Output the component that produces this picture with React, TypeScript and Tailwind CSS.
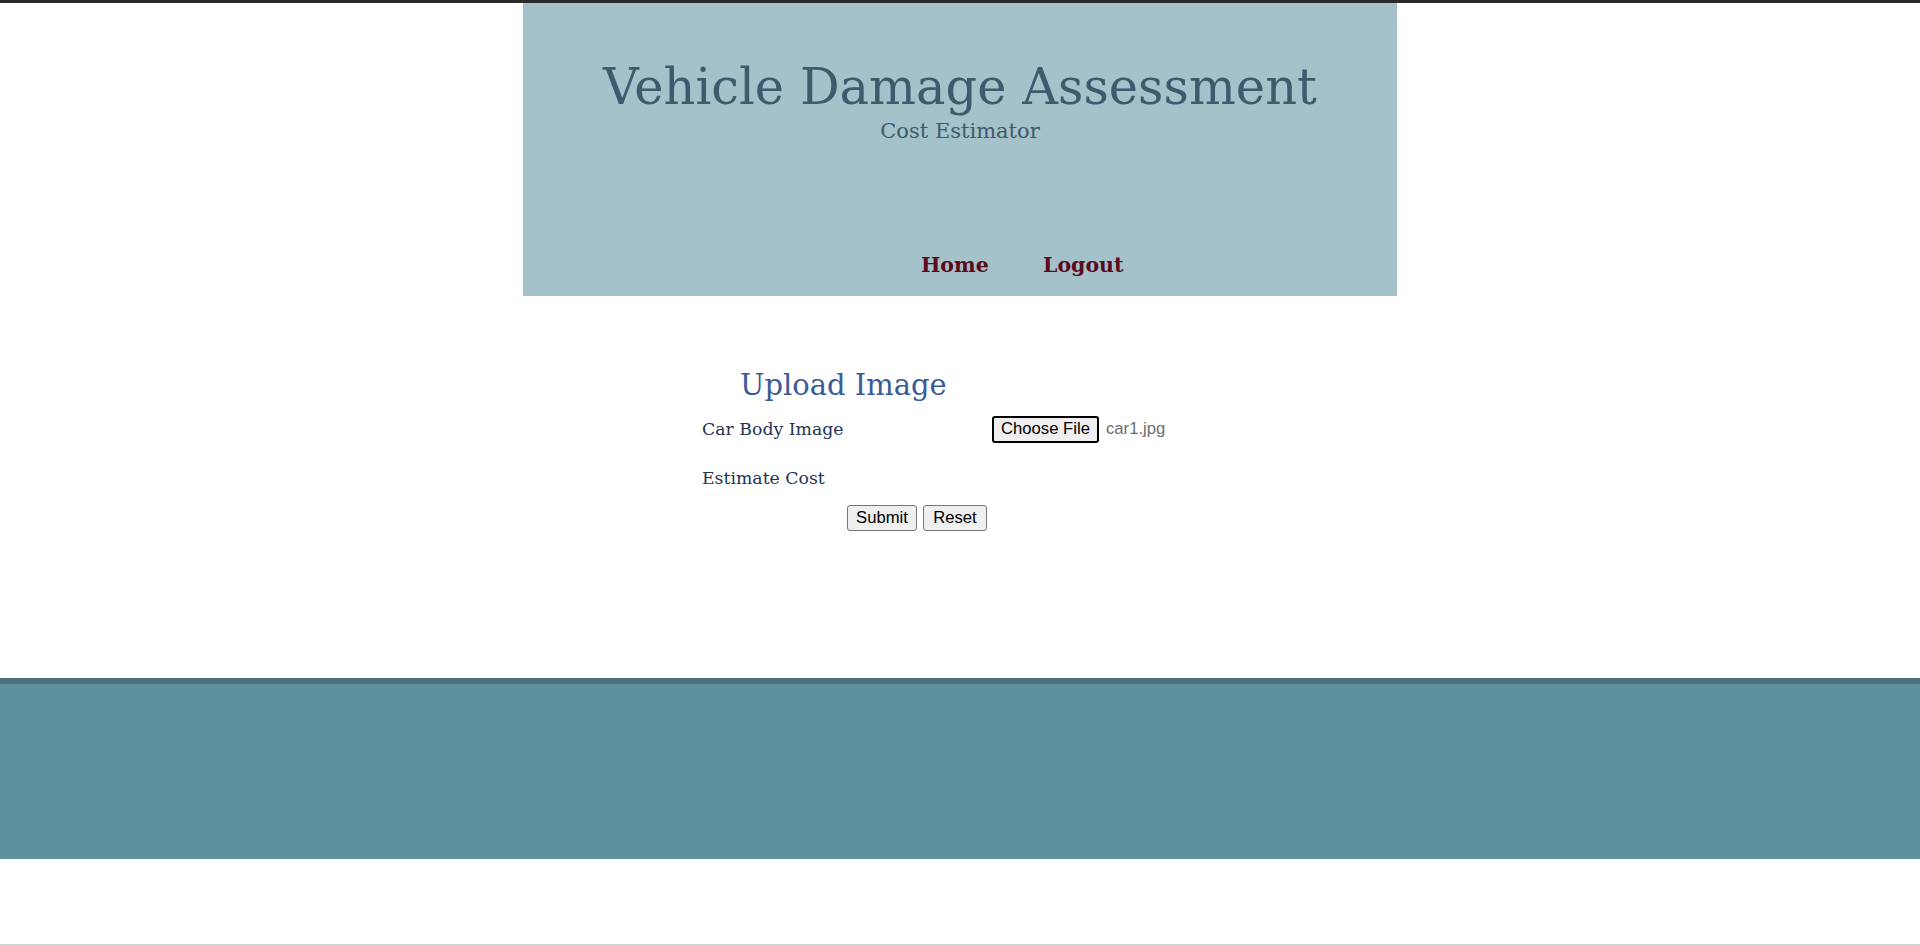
import React from "react"

const serif = "font-['DejaVu_Serif',serif]"

function Header() {
  return (
    <header className={`mx-auto w-[874px] h-[293px] bg-[#a5c1c9] flex flex-col items-center ${serif}`}>
      <h1 className="mt-[60px] text-[49.5px] leading-none text-[#3e5a6d] whitespace-nowrap">
        Vehicle Damage Assessment
      </h1>
      <p className="mt-[8px] text-[21px] leading-none text-[#3e5a6d]">Cost Estimator</p>
      {/* nav sits a bit right of centre, like the original ul */}
      <nav className="self-stretch mt-[113px] pl-[398px] flex items-center">
        <a href="#" className="w-[122px] text-[20.5px] leading-none font-bold text-[#5b0a1e]">
          Home
        </a>
        <a href="#" className="text-[20.5px] leading-none font-bold text-[#5b0a1e]">
          Logout
        </a>
      </nav>
    </header>
  )
}

function UploadForm() {
  return (
    <main className={`mx-auto w-[874px] h-[382px] ${serif}`}>
      <h2 className="ml-[217px] pt-[75px] text-[29px] leading-none text-[#3b5a98]">Upload Image</h2>
      <div className="ml-[179px] mt-[16px] flex items-center h-[27px]">
        <label className="w-[290px] text-[17.3px] leading-none text-[#233452]">Car Body Image</label>
        <button
          type="button"
          className="w-[107px] h-[27px] rounded-[3px] border-2 border-black bg-[#efefef] text-[16.67px] leading-none text-black font-['Liberation_Sans',Arial,sans-serif]"
        >
          Choose File
        </button>
        <span className="ml-[7px] text-[16.67px] leading-none text-[#6d6d6d] font-['Liberation_Sans',Arial,sans-serif]">
          car1.jpg
        </span>
      </div>
      <div className="ml-[179px] mt-[27px] text-[17.3px] leading-none text-[#233452]">Estimate Cost</div>
      <div className="ml-[324px] mt-[18px] flex gap-[6px] font-['Liberation_Sans',Arial,sans-serif]">
        <button
          type="submit"
          className="w-[70px] h-[26px] rounded-[3px] border border-[#767676] bg-[#efefef] text-[16.67px] leading-none text-black"
        >
          Submit
        </button>
        <button
          type="reset"
          className="w-[64px] h-[26px] rounded-[3px] border border-[#767676] bg-[#efefef] text-[16.67px] leading-none text-black"
        >
          Reset
        </button>
      </div>
    </main>
  )
}

export default function App() {
  return (
    <div className="min-h-[946px] bg-white border-t-[3px] border-[#2a2a2a] flex flex-col">
      <Header />
      <UploadForm />
      <footer className="h-[181px] border-t-[6px] border-[#4b727a] bg-[#5f909e]" />
      <div className="h-[85px]" />
      <div className="h-[2px] bg-[#d3d3d3]" />
    </div>
  )
}
